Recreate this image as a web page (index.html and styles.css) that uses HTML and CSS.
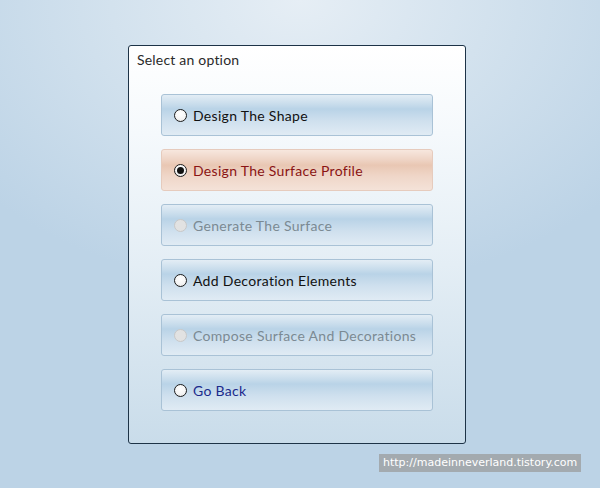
FILE: index.html
```html
<!DOCTYPE html>
<html lang="en">
<head>
  <meta charset="UTF-8" />
  <title>Select an option</title>
  <link rel="stylesheet" href="styles.css">
</head>
<body>
  <div class="stage">
    <form class="panel">
      <div class="panel-title">Select an option</div>
      <div class="options">
        <label class="option">
          <input type="radio" name="step" value="shape" />
          <span>Design The Shape</span>
        </label>
        <label class="option selected">
          <input type="radio" name="step" value="profile" checked />
          <span>Design The Surface Profile</span>
        </label>
        <label class="option disabled">
          <input type="radio" name="step" value="surface" disabled />
          <span>Generate The Surface</span>
        </label>
        <label class="option">
          <input type="radio" name="step" value="decoration" />
          <span>Add Decoration Elements</span>
        </label>
        <label class="option disabled">
          <input type="radio" name="step" value="compose" disabled />
          <span>Compose Surface And Decorations</span>
        </label>
        <label class="option back">
          <input type="radio" name="step" value="back" />
          <span>Go Back</span>
        </label>
      </div>
    </form>
    <div class="watermark">http://madeinneverland.tistory.com</div>
  </div>
</body>
</html>
```

FILE: styles.css
```css
/* Fondo */
body {
  margin: 0;
  height: 488px;
  overflow: hidden;
  font-family: 'Lato', 'DejaVu Sans', sans-serif;
  background: radial-gradient(ellipse 70% 60% at 50% 0%, #e6eef5 0%, #d3e2ee 45%, #bcd3e6 100%);
  background-color: #bcd3e6;
}

.stage {
  padding: 45px 0 0 128px;
}

/* Panel principal */
.panel {
  width: 336px;
  height: 397px;
  border: 1px solid #1d3347;
  border-radius: 3px;
  background: linear-gradient(to bottom, #ffffff 0%, #f5f9fc 22%, #e4eef5 55%, #c9dcea 100%);
}

.panel-title {
  padding: 5px 0 0 8px;
  font-size: 14px;
  letter-spacing: 0.2px;
  color: #2a2a2a;
  height: 43px;
}

.options {
  display: flex;
  flex-direction: column;
  gap: 13px;
  margin-left: 32px;
}

/* Opciones */
.option {
  display: flex;
  align-items: center;
  box-sizing: border-box;
  width: 272px;
  height: 42px;
  padding-left: 12px;
  border: 1px solid #a9c2d6;
  border-radius: 3px;
  font-size: 14px;
  letter-spacing: 0.3px;
  color: #111;
  background: linear-gradient(to bottom, #e3edf5 0%, #c6dbeb 25%, #b9d3e7 35%, #cfe0ee 65%, #e0ebf4 100%);
}

/* Radio a mano */
.option input {
  appearance: none;
  -webkit-appearance: none;
  box-sizing: border-box;
  margin: 0 6px 0 0;
  width: 13px;
  height: 13px;
  border: 1px solid #1c1c1c;
  border-radius: 50%;
  background: radial-gradient(circle at 50% 35%, #ffffff 0%, #f4f4f4 60%, #dedede 100%);
  display: grid;
  place-items: center;
}

.option input:checked::after {
  content: "";
  width: 7px;
  height: 7px;
  border-radius: 50%;
  background-color: #111;
}

.option input:disabled {
  border-color: #c8c8c8;
  background: #e2e2e2;
}

.option.selected {
  color: #8a1414;
  border-color: #e6cbbd;
  background: linear-gradient(to bottom, #f7e7de 0%, #eed3c4 25%, #e9c7b3 38%, #efd6c8 65%, #f4e2d8 100%);
}

.option.disabled {
  color: #7b8a93;
}

.option.back {
  color: #1b2a8c;
}

/* Marca de agua */
.watermark {
  margin: 10px 0 0 251px;
  width: 198px;
  height: 18px;
  line-height: 18px;
  background-color: #a3aaaf;
  color: #fff;
  font-family: 'DejaVu Sans', sans-serif;
  font-size: 11px;
  padding-left: 4px;
  white-space: nowrap;
  overflow: hidden;
}
```
